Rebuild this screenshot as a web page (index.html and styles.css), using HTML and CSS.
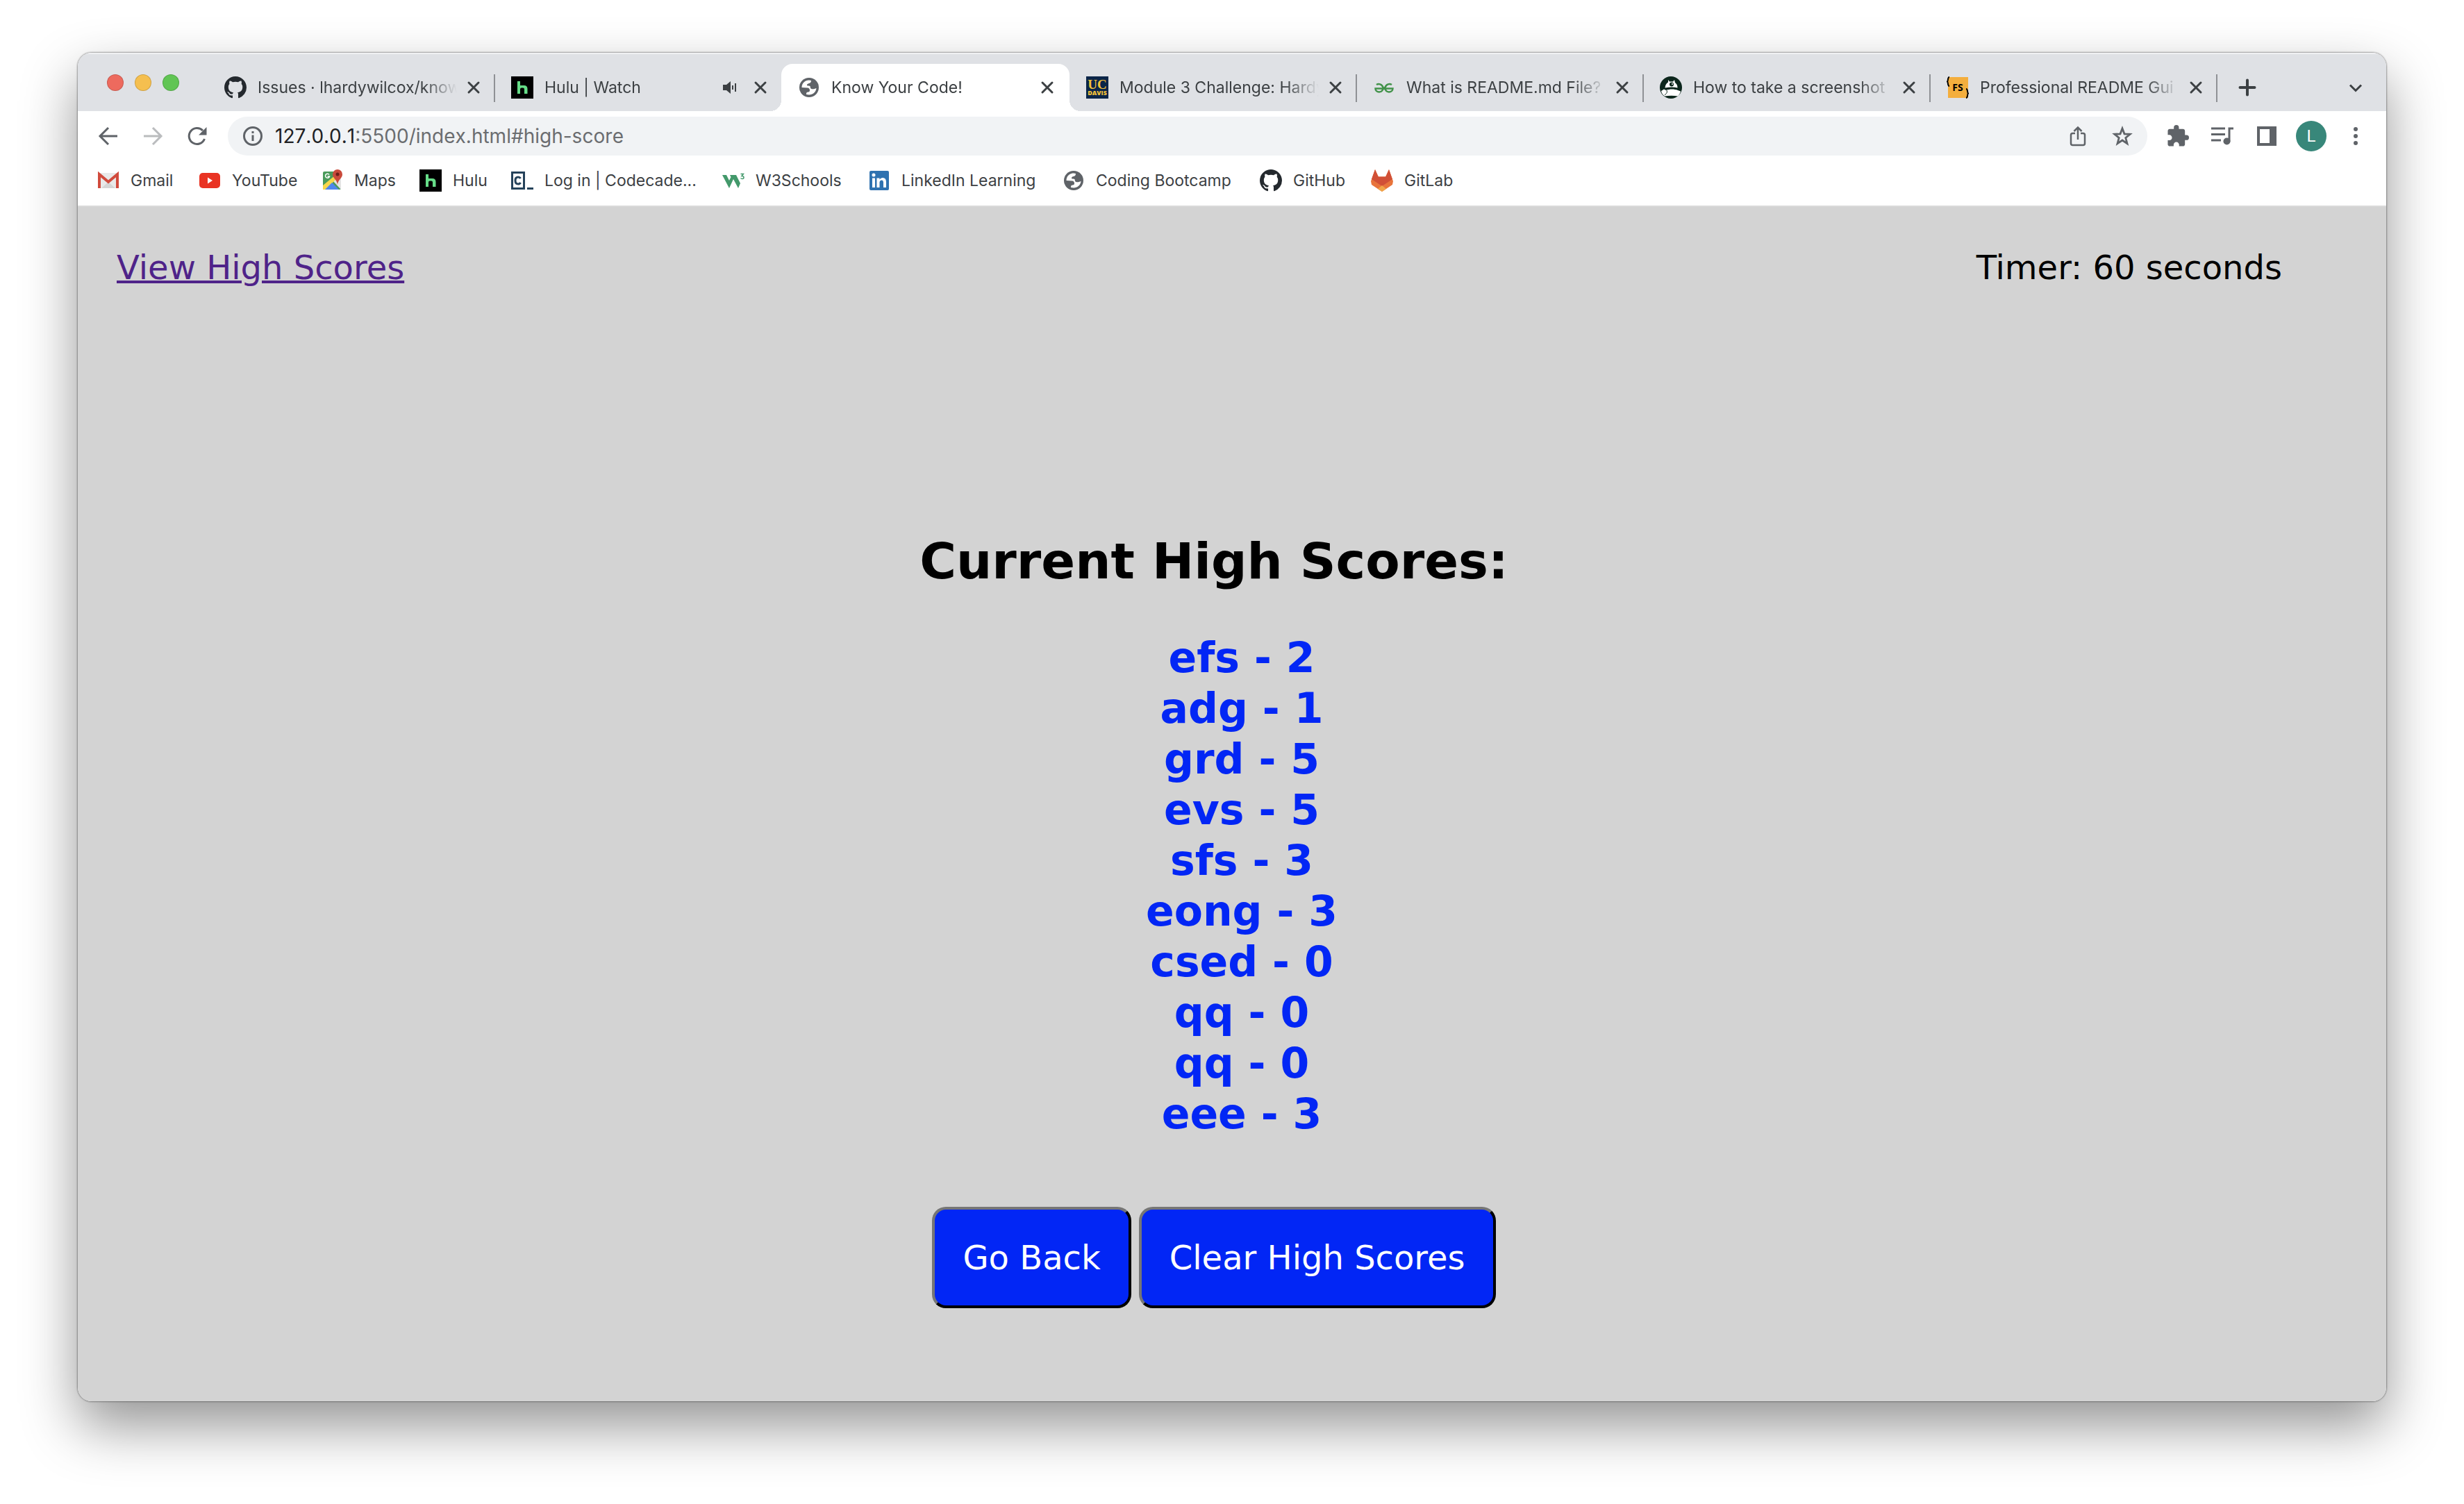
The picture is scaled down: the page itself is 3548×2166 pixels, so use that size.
FILE: index.html
```html
<!DOCTYPE html>
<html lang="en">
<head>
<meta charset="utf-8">
<title>Know Your Code!</title>
<link rel="stylesheet" href="styles.css">
</head>
<body>
<svg class="sprite" aria-hidden="true">
  <symbol id="close" viewBox="0 0 32 32"><path d="M9 9l14 14M23 9L9 23" fill="none" stroke="#3c4043" stroke-width="3" stroke-linecap="round"/></symbol>
  <symbol id="github" viewBox="0 0 16 16"><path fill="#24292e" fill-rule="evenodd" d="M8 0C3.58 0 0 3.58 0 8c0 3.54 2.29 6.53 5.47 7.59.4.07.55-.17.55-.38 0-.19-.01-.82-.01-1.49-2.01.37-2.53-.49-2.69-.94-.09-.23-.48-.94-.82-1.13-.28-.15-.68-.52-.01-.53.63-.01 1.08.58 1.23.82.72 1.21 1.87.87 2.33.66.07-.52.28-.87.51-1.07-1.78-.2-3.64-.89-3.64-3.95 0-.87.31-1.59.82-2.15-.08-.2-.36-1.02.08-2.12 0 0 .67-.21 2.2.82.64-.18 1.32-.27 2-.27s1.36.09 2 .27c1.53-1.04 2.2-.82 2.2-.82.44 1.1.16 1.92.08 2.12.51.56.82 1.27.82 2.15 0 3.07-1.87 3.75-3.65 3.95.29.25.54.73.54 1.48 0 1.07-.01 1.93-.01 2.2 0 .21.15.46.55.38A8.01 8.01 0 0 0 16 8c0-4.42-3.58-8-8-8z"/></symbol>
  <symbol id="hulu" viewBox="0 0 32 32"><path fill="#000" d="M0 0h32v32H0z"/><path fill="#66dd88" d="M9 7h4v6h5.500q5 0 5 5v7h-4.500v-6.500q0-2-2-2h-2q-2 0-2 2V25H9z"/></symbol>
  <symbol id="globe" viewBox="0 0 32 32"><circle cx="16" cy="16" r="14" fill="#5f6368"/><path fill="#fff" d="M5.500 16C5.500 10 10 5.500 16 5.500l3 .5c0 2.500-1 3.500-3 4-2 .5-3 1-3 2.500 0 1 1 1 2.500 1 2 0 2.500 1 2.500 3.500 1.500 1.500 4 2 8.500 0-.5 5.500-5 9.500-10.500 9.500l-4-.5c0-2.500.5-3.500 3-3.500 1.500 0 2-1 2-2.500s-1-3.500-3-3.500z"/></symbol>
</svg>
<div class="window">
  <header class="tabstrip">
    <div class="lights"><span class="light red"></span><span class="light yellow"></span><span class="light green"></span></div>
    <nav class="tabs">
      <div class="tab"><svg class="fav"><use href="#github"/></svg><span class="title">Issues · lhardywilcox/know-</span><button class="x" aria-label="Close tab"><svg><use href="#close"/></svg></button></div>
      <div class="tab"><svg class="fav"><use href="#hulu"/></svg><span class="title">Hulu | Watch</span><svg class="audio" viewBox="0 0 32 32"><path fill="#3c4043" d="M6 12h5l6-5v18l-6-5H6z"/><path d="M20 13v6M24 10v12" stroke="#3c4043" stroke-width="2"/></svg><button class="x" aria-label="Close tab"><svg><use href="#close"/></svg></button></div>
      <div class="tab active"><svg class="fav"><use href="#globe"/></svg><span class="title">Know Your Code!</span><button class="x" aria-label="Close tab"><svg><use href="#close"/></svg></button></div>
      <div class="tab"><svg class="fav" viewBox="0 0 32 32"><path fill="#0b2548" d="M0 0h32v32H0z"/><text x="16" y="18" text-anchor="middle" class="uc">UC</text><text x="16" y="27" text-anchor="middle" class="davis">DAVIS</text></svg><span class="title">Module 3 Challenge: Hardy</span><button class="x" aria-label="Close tab"><svg><use href="#close"/></svg></button></div>
      <div class="tab"><svg class="fav" viewBox="0 0 32 32"><g fill="none" stroke="#43934b" stroke-width="2.500"><path d="M5 12c3-2 8-1 9.500 4 .5 4-2.500 6.500-5.500 6.500s-5.500-2-5.500-5h25c0 3-2.500 5-5.500 5s-6-2.500-5.500-6.500c1.500-5 6.500-6 9.500-4"/><path d="M12 12l8 10M20 12l-8 10" stroke-width="1.500"/></g></svg><span class="title">What is README.md File?</span><button class="x" aria-label="Close tab"><svg><use href="#close"/></svg></button></div>
      <div class="tab"><svg class="fav" viewBox="0 0 32 32"><circle cx="16" cy="16" r="16" fill="#0c261c"/><path fill="#fff" d="M12 5l2 2.500h5L21 5l1 4c3 2 3.500 5 3.500 7.500-5-1.500-11-1.500-18 0C8 12 9.500 10 12 8.500z"/><circle cx="17" cy="11.500" r="3" fill="#0c261c"/><circle cx="18" cy="11" r="1" fill="#fff"/><path fill="#fff" d="M2 21l4-2.500 3 1.500c5-2 12-2 17 0l4 1.500c-.5 3-3 6-4 7-6-1-13-1-19 0-3-2-4.500-5-5-7.500z"/><path d="M10 20c1 3 0 5-3 6.500" fill="none" stroke="#0c261c"/></svg><span class="title">How to take a screenshot</span><button class="x" aria-label="Close tab"><svg><use href="#close"/></svg></button></div>
      <div class="tab"><svg class="fav" viewBox="0 0 32 32"><path fill="#f4ae3d" d="M2 1h29v30H2z"/><text x="16" y="21" text-anchor="middle" class="fs">FS</text><path d="M4 1C1 1 2.500 7 1 7.500 2.500 8 1 14 4 14M28 18c3 0 1.500 6 3 6.500-1.500.5 0 6.500-3 6.500" fill="none" stroke="#000" stroke-width="2"/></svg><span class="title">Professional README Gui</span><button class="x" aria-label="Close tab"><svg><use href="#close"/></svg></button></div>
    </nav>
    <div class="strip-end">
      <button class="tool" aria-label="New tab"><svg viewBox="0 0 32 32"><path d="M16 5.500v21M5.500 16h21" stroke="#3c4043" stroke-width="4" stroke-linecap="round"/></svg></button>
      <button class="tool" aria-label="Search tabs"><svg viewBox="0 0 32 32"><path d="M8 12.500l8 8 8-8" fill="none" stroke="#3c4043" stroke-width="3"/></svg></button>
    </div>
  </header>

  <div class="toolbar">
    <div class="tools">
      <button class="tool" aria-label="Back"><svg viewBox="0 0 32 32"><path d="M29 16H5M16 4L4 16l12 12" fill="none" stroke="#5f6368" stroke-width="3"/></svg></button>
      <button class="tool" aria-label="Forward"><svg viewBox="0 0 32 32"><path d="M3 16h24M16 4l12 12-12 12" fill="none" stroke="#babcbe" stroke-width="3"/></svg></button>
      <button class="tool" aria-label="Reload"><svg viewBox="0 0 32 32"><path d="M26.500 20A11.500 11.500 0 1 1 24 8" fill="none" stroke="#5f6368" stroke-width="3"/><path fill="#5f6368" d="M29.500 3v11.500H18z"/></svg></button>
    </div>
    <div class="omnibox">
      <svg class="info" viewBox="0 0 32 32"><circle cx="16" cy="16" r="12.500" fill="none" stroke="#5f6368" stroke-width="3"/><path d="M16 14.500V23M16 9v3" stroke="#5f6368" stroke-width="3"/></svg>
      <p class="url"><b>127.0.0.1</b>:5500/index.html#high-score</p>
      <button class="tool" aria-label="Share"><svg viewBox="0 0 32 32"><path d="M12 12H8.500q-2.500 0-2.500 2.500v12q0 2.500 2.500 2.500h15q2.500 0 2.500-2.500v-12q0-2.500-2.500-2.500H20M16 21V3.500M10.500 9L16 3.500 21.500 9" fill="none" stroke="#5f6368" stroke-width="2.500"/></svg></button>
      <button class="tool" aria-label="Bookmark"><svg viewBox="0 0 32 32"><path d="M16 5l3 7.800 8.200.5-6.400 5.200 2.200 8.200L16 22l-7 4.700 2.200-8.200-6.400-5.200 8.200-.5z" fill="none" stroke="#5f6368" stroke-width="2.800"/></svg></button>
    </div>
    <div class="tools">
      <button class="tool" aria-label="Extensions"><svg viewBox="1 1 22 22"><path fill="#5f6368" d="M20.500 11H19V7c0-1.100-.9-2-2-2h-4V3.500a2.500 2.500 0 0 0-5 0V5H4c-1.100 0-1.990.9-1.990 2v3.800H3.500c1.490 0 2.700 1.210 2.700 2.700s-1.210 2.700-2.700 2.700H2V20c0 1.100.9 2 2 2h3.800v-1.500c0-1.490 1.210-2.700 2.700-2.700s2.700 1.210 2.700 2.700V22H17c1.100 0 2-.9 2-2v-4h1.500a2.500 2.500 0 0 0 0-5z"/></svg></button>
      <button class="tool" aria-label="Media"><svg viewBox="0 0 32 32"><path d="M0 5h20M0 13.500h20M0 22h14M32 5h-6v19" fill="none" stroke="#5f6368" stroke-width="3"/><circle cx="22.500" cy="23.500" r="5" fill="#5f6368"/></svg></button>
      <button class="tool" aria-label="Side panel"><svg viewBox="0 0 32 32"><path fill="#5f6368" fill-rule="evenodd" d="M2 2h28v28H2zM6 6v20h14V6z"/></svg></button>
      <button class="tool" aria-label="Profile"><span class="avatar">L</span></button>
      <button class="tool" aria-label="Menu"><svg viewBox="0 0 32 32"><g fill="#5f6368"><circle cx="16" cy="6" r="3"/><circle cx="16" cy="16" r="3"/><circle cx="16" cy="26" r="3"/></g></svg></button>
    </div>
  </div>

  <nav class="bookmarks">
    <a href="#gmail"><svg class="fav" viewBox="0 0 32 32"><path fill="#e9e9e9" d="M2 5h28v22H2z"/><path fill="#d5d5d5" d="M6 27l10-9 10 9z"/><path d="M3 27V7l13 11L29 7v20" fill="none" stroke="#d14b3d" stroke-width="4"/></svg>Gmail</a>
    <a href="#youtube"><svg class="fav" viewBox="0 0 32 32"><rect x="1" y="5" width="30" height="22" rx="5" fill="#e93323"/><path fill="#fff" d="M13 11.500v9l7-4.500z"/></svg>YouTube</a>
    <a href="#maps"><svg class="fav" viewBox="0 0 32 32"><rect x="3" y="3" width="26" height="26" rx="2" fill="#4a9a5a"/><path fill="#e4e4e4" d="M17 16L29 8v21z"/><path fill="#f7d64a" d="M3 29v-6L20 9l3 4L7 29z"/><path fill="#4f86ec" d="M6 29l10-10 10 10z"/><path fill="#c94a3b" d="M24 0a7 7 0 0 1 7 7c0 6-6 7-7 15-1-8-7-9-7-15a7 7 0 0 1 7-7z"/><circle cx="24" cy="7" r="2.500" fill="#6d1f19"/><path d="M12 7.500a3 3 0 1 0 .5 2.500H9.500" fill="none" stroke="#fff" stroke-width="1.500"/></svg>Maps</a>
    <a href="#hulu-home"><svg class="fav"><use href="#hulu"/></svg>Hulu</a>
    <a href="#codecademy"><svg class="fav" viewBox="0 0 32 32"><path d="M1.500 4.500h17v23h-17z" fill="none" stroke="#25425a" stroke-width="3"/><path d="M13.500 13q-1-2-3.500-2-4 0-4 5t4 5q2.500 0 3.500-2" fill="none" stroke="#25425a" stroke-width="3"/><path fill="#25425a" d="M23 26h9v3h-9z"/></svg>Log in | Codecade...</a>
    <a href="#w3schools"><svg class="fav" viewBox="0 0 32 32"><path fill="#43996b" d="M0 8h6l4 8 2.500-5L11 8h9l6 12-3 7-7-13-6 13z"/><path d="M26.500 6.500h4L28 9.500q3 0 3 2t-2 2-2.500-1" fill="none" stroke="#43996b" stroke-width="1.500"/></svg>W3Schools</a>
    <a href="#linkedin"><svg class="fav" viewBox="0 0 32 32"><rect x="2" y="2" width="28" height="28" rx="2" fill="#2f72b0"/><path fill="#fff" d="M6 12.500h4V26H6zM12.500 12.500h4v2q1.500-2.500 4.500-2.500 5 0 5 6v8h-4v-7.500q0-3-2.500-3t-3 3V26h-4z"/><circle cx="8" cy="8" r="2.500" fill="#fff"/></svg>LinkedIn Learning</a>
    <a href="#bootcamp"><svg class="fav"><use href="#globe"/></svg>Coding Bootcamp</a>
    <a href="#github-home"><svg class="fav"><use href="#github"/></svg>GitHub</a>
    <a href="#gitlab"><svg class="fav" viewBox="0 0 32 32"><path fill="#e8743b" d="M0 17L6 0l5 10.500h10L26 0l6 17-1 5-15 10L1 22z"/><path fill="#d15036" d="M1 14L6 0l4.500 10.500h11L26 0l5 14-15 10z"/><path fill="#f0a548" d="M16 23l6 5-6 4-6-4z"/></svg>GitLab</a>
  </nav>

  <main class="page">
    <div class="quiz-head">
      <a class="scores-link" href="#high-score">View High Scores</a>
      <p class="timer">Timer: 60 seconds</p>
    </div>
    <section class="scores" id="high-score">
      <h1>Current High Scores:</h1>
      <ul>
        <li>efs - 2</li>
        <li>adg - 1</li>
        <li>grd - 5</li>
        <li>evs - 5</li>
        <li>sfs - 3</li>
        <li>eong - 3</li>
        <li>csed - 0</li>
        <li>qq - 0</li>
        <li>qq - 0</li>
        <li>eee - 3</li>
      </ul>
      <div class="actions"><button class="btn">Go Back</button><button class="btn">Clear High Scores</button></div>
    </section>
  </main>
</div>
</body>
</html>
```
FILE: styles.css
```css
* { box-sizing: border-box; }

body {
  margin: 0;
  padding: 76px 112px 148px;
  min-height: 100vh;
  display: flex;
  background: #fff;
  color: #3c4043;
  font-family: Inter, "Liberation Sans", sans-serif;
  font-size: 23px;
}

p, h1, ul { margin: 0; padding: 0; }
button { font: inherit; color: inherit; background: none; border: 0; padding: 0; }
svg { display: block; }
.sprite { display: none; }

.window {
  flex: 1;
  min-width: 0;
  display: flex;
  flex-direction: column;
  overflow: hidden;
  border-radius: 20px;
  background: #fff;
  box-shadow: 0 0 2px 1px rgba(0, 0, 0, .35), 0 36px 80px rgba(0, 0, 0, .42);
}

/* tab strip */
.tabstrip { display: flex; height: 84px; background: #dfe1e5; box-shadow: inset 0 2px #f0f1f3; }
.lights { display: flex; gap: 16px; width: 187px; padding: 31px 0 0 42px; }
.light { width: 24px; height: 24px; border-radius: 50%; border: 1px solid rgba(0, 0, 0, .15); }
.red { background: #ed6a5e; }
.yellow { background: #f5bf4f; }
.green { background: #61c554; }

.tabs { flex: 1; display: flex; padding-top: 16px; min-width: 0; }
.tab {
  flex: 1 1 0;
  min-width: 0;
  display: flex;
  align-items: center;
  padding: 0 14px 0 24px;
  position: relative;
}
.tab:not(.active)::after {
  content: "";
  position: absolute;
  right: -1px;
  top: 15px;
  width: 2px;
  height: 40px;
  background: #8f9195;
}
.tab:has(+ .active)::after { display: none; }
.tab.active { flex-basis: 4px; padding-right: 16px; background: #fff; border-radius: 16px 16px 0 0; }
.active::before, .active::after {
  content: "";
  position: absolute;
  bottom: 0;
  width: 16px;
  height: 16px;
}
.active::before { left: -16px; background: radial-gradient(circle at 0 0, #dfe1e5 16px, #fff 16px); }
.active::after { right: -16px; background: radial-gradient(circle at 100% 0, #dfe1e5 16px, #fff 16px); }
.fav { width: 32px; height: 32px; flex: none; }
.title {
  flex: 1;
  min-width: 0;
  margin: 0 8px 0 16px;
  overflow: hidden;
  white-space: nowrap;
  line-height: 32px;
  -webkit-mask-image: linear-gradient(to left, transparent, #000 48px);
  mask-image: linear-gradient(to left, transparent, #000 48px);
}
.x, .x svg { width: 32px; height: 32px; }
.audio { width: 32px; height: 32px; margin-right: 12px; }
.uc { font: 700 19px "Liberation Serif", serif; fill: #f3c13a; }
.davis { font: 800 9px "Open Sans", sans-serif; fill: #f3c13a; }
.fs { font: 700 14px "Open Sans", sans-serif; fill: #000; }
.strip-end {
  width: 244px;
  display: flex;
  justify-content: space-between;
  align-items: flex-start;
  padding: 22px 16px 0;
}

/* toolbar */
.toolbar { display: flex; gap: 16px; padding: 8px 16px; }
.tools { display: flex; gap: 8px; }
.tool { width: 56px; height: 56px; display: grid; place-items: center; }
.tool svg { width: 32px; height: 32px; }
.avatar {
  width: 44px;
  height: 44px;
  border-radius: 50%;
  background: #38877a;
  color: #fff;
  font: 24px/44px Roboto, sans-serif;
}
.omnibox {
  flex: 1;
  display: flex;
  align-items: center;
  gap: 8px;
  padding: 0 8px 0 20px;
  border-radius: 28px;
  background: #f1f3f5;
}
.info { width: 32px; height: 32px; }
.url { flex: 1; padding-left: 8px; font-size: 28px; font-kerning: none; color: #6b6d70; }
.url b { font-weight: 400; color: #202124; }

/* bookmarks */
.bookmarks {
  display: grid;
  grid-template-columns: 146px 176px 142px 132px 304px 210px 280px 284px 160px auto;
  align-items: center;
  height: 66px;
  padding: 0 28px 8px;
  border-bottom: 2px solid #dadada;
}
.bookmarks a { display: flex; align-items: center; gap: 16px; color: inherit; text-decoration: none; white-space: nowrap; }

/* quiz page */
.page { flex: 1; background: #d3d3d3; color: #000; font-family: Verdana, "DejaVu Sans", sans-serif; font-size: 48px; line-height: 58px; }
.quiz-head { display: flex; justify-content: space-between; padding: 58px 150px 0 56px; }
.scores-link { color: #4f2389; text-decoration-thickness: 4px; }
.scores { padding: 350px 52px 120px 0; text-align: center; }
.scores h1 { font-size: 72px; line-height: 88px; }
.scores ul { list-style: none; margin: 59px 0 97px; padding-left: 80px; font-size: 60px; line-height: 73px; font-weight: 700; color: #0226f5; }
.actions { display: flex; justify-content: center; gap: 11px; }
.btn { padding: 40px; border: 4px outset #767676; border-color: #767676 #212121 #212121 #767676; border-radius: 20px; background: #0226f5; color: #fff; }
```
